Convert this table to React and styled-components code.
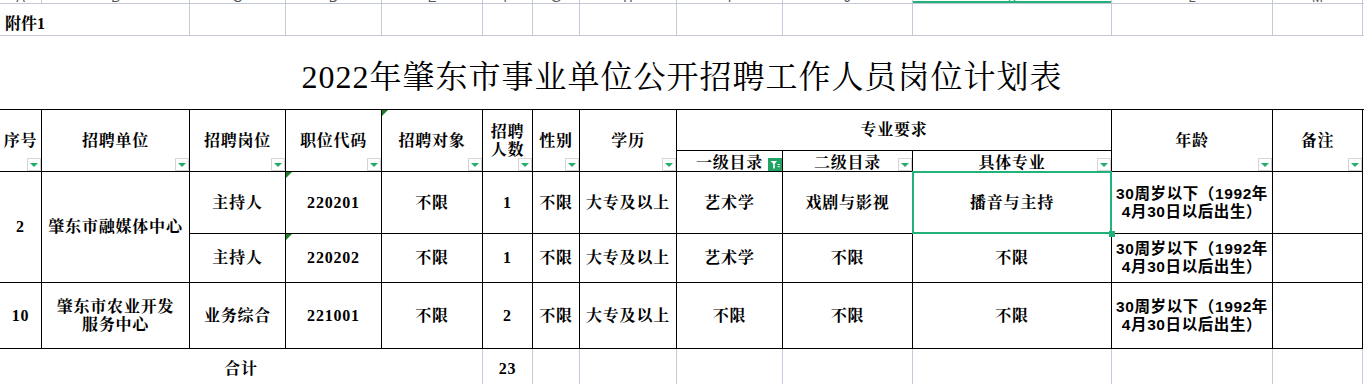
import React from 'react'
import styled, { createGlobalStyle, css } from 'styled-components'

// column widths read off the sheet: A..M then 1px slack
const COLS = '42px 148px 96px 96px 101px 50px 47px 97px 106px 130px 199px 161px 90px 1fr'
const GRID = '#c5c9d9'
const GREEN = '#21b27a'
const LETTERS = ['A', 'B', 'C', 'D', 'E', 'F', 'G', 'H', 'I', 'J', 'K', 'L', 'M']

const GlobalStyle = createGlobalStyle`
  html, body {
    margin: 0;
    background: #fff;
  }
  body {
    font-family: "Liberation Serif", "Noto Serif CJK SC", "Noto Sans CJK SC", serif;
    color: #000;
  }
`

const Sheet = styled.div`
  width: 1364px;
  height: 384px;
  overflow: hidden;
`

const ColHeader = styled.div`
  display: grid;
  grid-template-columns: ${COLS};
  height: 4px;
  box-sizing: border-box;
  border-bottom: 1px solid ${GRID};
`

const ColLabel = styled.div`
  display: flex;
  align-items: flex-end;
  justify-content: center;
  overflow: hidden;
  border-right: 1px solid ${GRID};
  font: 13px/13px "Liberation Sans", sans-serif;
  color: #555;
  ${p => p.$active && css`
    color: ${GREEN};
    box-shadow: inset 0 -2px 0 ${GREEN};
  `}
  span {
    margin-bottom: -1px;
  }
`

const NoteRow = styled.div`
  display: grid;
  grid-template-columns: ${COLS};
  height: 32px;
  box-sizing: border-box;
  border-bottom: 1px solid ${GRID};
`

const NoteCell = styled.div`
  grid-column: span ${p => p.$span || 1};
  border-right: 1px solid ${GRID};
  display: flex;
  align-items: flex-end;
  padding: 0 0 1px 5px;
  font-size: 16px;
  line-height: 20px;
  font-weight: bold;
`

const TitleRow = styled.div`
  height: 73px;
  display: flex;
  align-items: center;
  justify-content: center;
  font-size: 32px;
  letter-spacing: 1px;
  padding-top: 3px;
  box-sizing: border-box;
`

const Table = styled.div`
  display: grid;
  grid-template-columns: ${COLS};
  grid-template-rows: 41px 21px 62px 49px 66px 40px;
  border-top: 1px solid #000;
`

const Cell = styled.div`
  grid-column: ${p => p.$col};
  grid-row: ${p => p.$row};
  position: relative;
  display: flex;
  flex-direction: column;
  align-items: center;
  justify-content: center;
  text-align: center;
  box-sizing: border-box;
  border-right: 1px solid ${p => (p.$light ? GRID : '#000')};
  border-bottom: 1px solid ${p => (p.$light ? 'transparent' : '#000')};
  font-size: 16px;
  font-weight: bold;
  line-height: 18px;
  letter-spacing: 0.8px;
  white-space: pre-line;
  padding-top: ${p => p.$pt || 0}px;
`

const Age = styled.span`
  font-family: "Liberation Sans", "Noto Sans CJK SC", sans-serif;
  font-size: 15.5px;
  letter-spacing: 0.6px;
`

const FilterBtn = styled.span`
  position: absolute;
  right: 0;
  bottom: 0;
  width: 14px;
  height: 13px;
  box-sizing: border-box;
  border: 1px solid ${p => (p.$on ? '#21a366' : '#d3d5d9')};
  background: ${p => (p.$on ? '#21a366' : '#fff')};
  display: flex;
  align-items: center;
  justify-content: center;
`

const Arrow = styled.i`
  width: 0;
  height: 0;
  border-left: 4px solid transparent;
  border-right: 4px solid transparent;
  border-top: 4px solid #1fae6e;
  margin-top: 1px;
`

const Tri = styled.i`
  position: absolute;
  top: 0;
  left: 0;
  width: 0;
  height: 0;
  border-top: 6px solid #1d7f24;
  border-right: 6px solid transparent;
`

const Selection = styled.span`
  position: absolute;
  top: -1px;
  left: -1px;
  right: -1px;
  bottom: -1px;
  border: 2px solid ${GREEN};
  pointer-events: none;
  z-index: 2;
  &::after {
    content: '';
    position: absolute;
    right: -5px;
    bottom: -5px;
    width: 6px;
    height: 6px;
    background: ${GREEN};
  }
`

const Filter = ({ on }) => (
  <FilterBtn $on={on}>
    {on ? (
      <svg width="12" height="11" viewBox="0 0 12 11">
        <path d="M1.5 2h6.5L5.8 4.8V9.5H4.2V4.8z" fill="#fff" />
        <rect x="8.6" y="5" width="2.2" height="1" fill="#fff" />
        <rect x="8.6" y="7.2" width="2.2" height="1" fill="#fff" />
      </svg>
    ) : (
      <Arrow />
    )}
  </FilterBtn>
)

const AGE = '30周岁以下（1992年\n4月30日以后出生）'

const rows = [
  { r: 3, cells: ['主持人', '220201', '不限', '1', '不限', '大专及以上', '艺术学', '戏剧与影视', '播音与主持'], tri: true, sel: true },
  { r: 4, cells: ['主持人', '220202', '不限', '1', '不限', '大专及以上', '艺术学', '不限', '不限'], tri: true },
  { r: 5, cells: ['业务综合', '221001', '不限', '2', '不限', '大专及以上', '不限', '不限', '不限'] },
]

export default function App() {
  return (
    <>
      <GlobalStyle />
      <Sheet>
        <ColHeader>
          {LETTERS.map(l => (
            <ColLabel key={l} $active={l === 'K'}>
              <span>{l}</span>
            </ColLabel>
          ))}
        </ColHeader>

        <NoteRow>
          <NoteCell $span={2}>附件1</NoteCell>
          {LETTERS.slice(2).map(l => <NoteCell key={l} />)}
        </NoteRow>

        <TitleRow>2022年肇东市事业单位公开招聘工作人员岗位计划表</TitleRow>

        <Table>
          <Cell $col="1" $row="1 / 3">序号<Filter /></Cell>
          <Cell $col="2" $row="1 / 3">招聘单位<Filter /></Cell>
          <Cell $col="3" $row="1 / 3">招聘岗位<Filter /></Cell>
          <Cell $col="4" $row="1 / 3">职位代码<Filter /></Cell>
          <Cell $col="5" $row="1 / 3"><Tri />招聘对象<Filter /></Cell>
          <Cell $col="6" $row="1 / 3">{'招聘\n人数'}<Filter /></Cell>
          <Cell $col="7" $row="1 / 3">性别<Filter /></Cell>
          <Cell $col="8" $row="1 / 3">学历<Filter /></Cell>
          <Cell $col="9 / 12" $row="1">专业要求</Cell>
          <Cell $col="9" $row="2" $pt={3}>一级目录<Filter on /></Cell>
          <Cell $col="10" $row="2" $pt={3}>二级目录<Filter /></Cell>
          <Cell $col="11" $row="2" $pt={3}>具体专业<Filter /></Cell>
          <Cell $col="12" $row="1 / 3">年龄<Filter /></Cell>
          <Cell $col="13" $row="1 / 3">备注<Filter /></Cell>

          <Cell $col="1" $row="3 / 5">2</Cell>
          <Cell $col="2" $row="3 / 5">肇东市融媒体中心</Cell>
          <Cell $col="1" $row="5">10</Cell>
          <Cell $col="2" $row="5">{'肇东市农业开发\n服务中心'}</Cell>

          {rows.map(row => (
            <React.Fragment key={row.r}>
              {row.cells.map((txt, i) => (
                <Cell key={i} $col={String(i + 3)} $row={String(row.r)}>
                  {row.tri && i === 1 && <Tri />}
                  {txt}
                  {row.sel && i === 8 && <Selection />}
                </Cell>
              ))}
              <Cell $col="12" $row={String(row.r)}><Age>{AGE}</Age></Cell>
              <Cell $col="13" $row={String(row.r)} />
            </React.Fragment>
          ))}

          <Cell $col="1 / 6" $row="6" $light>合计</Cell>
          <Cell $col="6" $row="6" $light>23</Cell>
          {[7, 8, 9, 10, 11, 12, 13].map(c => (
            <Cell key={c} $col={String(c)} $row="6" $light />
          ))}
        </Table>
      </Sheet>
    </>
  )
}
